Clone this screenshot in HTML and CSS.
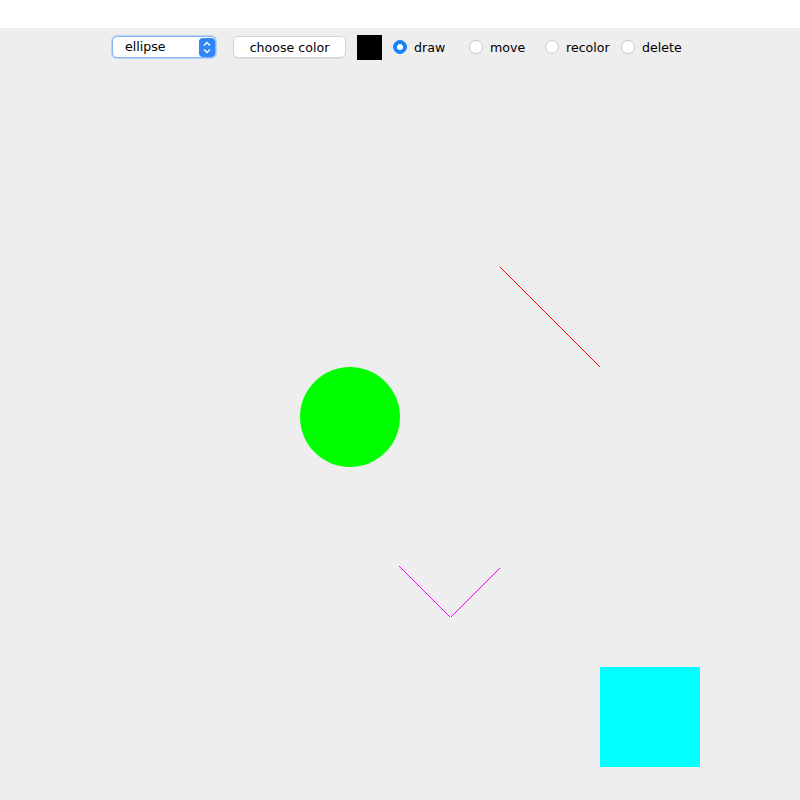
FILE: index.html
```html
<!DOCTYPE html>
<html>
<head>
<meta charset="utf-8">
<link rel="stylesheet" href="styles.css">
</head>
<body>
<div class="window">
  <div class="toolbar">
    <div class="select">
      <span class="select-text">ellipse</span>
      <span class="stepper">
        <svg width="16" height="19" viewBox="0 0 16 19">
          <rect x="0" y="0" width="16" height="19" rx="4" fill="#2f86f6"/>
          <path d="M5 7.5 L8 4.5 L11 7.5" fill="none" stroke="#fff" stroke-width="1.4"/>
          <path d="M5 11.5 L8 14.5 L11 11.5" fill="none" stroke="#fff" stroke-width="1.4"/>
        </svg>
      </span>
    </div>
    <div class="button">choose color</div>
    <div class="swatch"></div>
    <div class="radios">
      <label class="radio"><span class="dot on"></span><span class="rlabel">draw</span></label>
      <label class="radio"><span class="dot"></span><span class="rlabel">move</span></label>
      <label class="radio"><span class="dot"></span><span class="rlabel">recolor</span></label>
      <label class="radio"><span class="dot"></span><span class="rlabel">delete</span></label>
    </div>
  </div>
  <svg class="canvas" width="800" height="734" viewBox="0 66 800 734">
    <line x1="500.5" y1="267.5" x2="600.5" y2="367.5" stroke="#ff0000" stroke-width="1" shape-rendering="crispEdges"/>
    <circle cx="350" cy="417" r="50" fill="#00ff00"/>
    <line x1="399.5" y1="566.5" x2="450.5" y2="617.5" stroke="#ff00ff" stroke-width="1" shape-rendering="crispEdges"/>
    <line x1="450.5" y1="617.5" x2="499.5" y2="568.5" stroke="#ff00ff" stroke-width="1" shape-rendering="crispEdges"/>
    <rect x="600" y="667" width="100" height="100" fill="#00ffff"/>
  </svg>
</div>
</body>
</html>
```
FILE: styles.css
```css
html, body {
  margin: 0;
  padding: 0;
  background: #ffffff;
}
body {
  font-family: "DejaVu Sans", "Liberation Sans", sans-serif;
  font-size: 12.6px;
  color: #000;
}
.window {
  margin-top: 28px;
  height: 772px;
  background: #eeeeee;
  display: flex;
  flex-direction: column;
  overflow: hidden;
}
.toolbar {
  height: 38px;
  display: flex;
  align-items: center;
  padding-left: 112px;
  box-sizing: border-box;
}
.select {
  width: 104px;
  height: 22px;
  box-sizing: border-box;
  background: #fff;
  border: 1px solid #86b3f2;
  border-radius: 5px;
  box-shadow: 0 0 0 1px #b9d4f9;
  display: flex;
  align-items: center;
  justify-content: space-between;
  padding: 0 0 0 12px;
}
.select-text {
  line-height: 1;
}
.stepper {
  display: flex;
}
.stepper svg {
  display: block;
}
.button {
  margin-left: 17px;
  width: 113px;
  height: 22px;
  box-sizing: border-box;
  background: #fff;
  border: 1px solid #d4d4d4;
  border-radius: 5px;
  display: flex;
  align-items: center;
  justify-content: center;
  box-shadow: 0 1px 0 rgba(0,0,0,0.06);
}
.swatch {
  margin-left: 11px;
  width: 25px;
  height: 25px;
  background: #000;
}
.radios {
  display: flex;
  margin-left: 11px;
}
.radio {
  width: 76px;
  display: flex;
  align-items: center;
}
.dot {
  width: 14px;
  height: 14px;
  box-sizing: border-box;
  border-radius: 50%;
  background: #fff;
  border: 1px solid #c8c8c8;
  display: flex;
  align-items: center;
  justify-content: center;
}
.dot.on {
  background: #1a82fb;
  border-color: #1a82fb;
}
.dot.on::after {
  content: "";
  width: 6px;
  height: 6px;
  border-radius: 50%;
  background: #fff;
}
.rlabel {
  margin-left: 7px;
}
.canvas {
  display: block;
  flex: none;
}
```
